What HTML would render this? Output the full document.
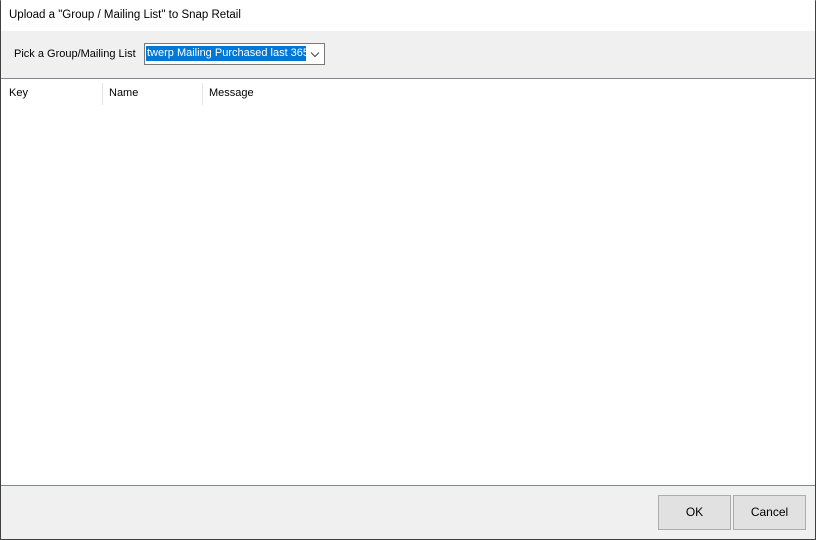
<!DOCTYPE html>
<html><head><style>
*{margin:0;padding:0;box-sizing:border-box}
body{width:816px;height:540px;position:relative;overflow:hidden;background:#f0f0f0;font-family:"Liberation Sans",sans-serif;font-size:11px;color:#000}
.win{position:absolute;left:0;top:0;width:816px;height:540px;border:1px solid #404040;border-top:1px solid #aaa}
.title{position:absolute;left:0;top:-1px;width:814px;height:31px;background:#fff;padding:9px 0 0 8px;font-size:11.5px}
.lbl{position:absolute;left:13px;top:47px;white-space:nowrap}
.combo{position:absolute;left:143px;top:42px;width:181px;height:22px;background:#fff;border:1px solid #7a7a7a}
.sel{position:absolute;left:1px;top:2px;width:160px;height:15px;background:#0078d7;color:#fff;padding:0 0 0 1px;line-height:15px;white-space:nowrap;overflow:hidden;font-size:11px}
.list{position:absolute;left:0;top:77px;width:814px;height:408px;background:#fff;border-top:1px solid #828790;border-bottom:1px solid #828790}
.h{position:absolute;top:8px}
.sep{position:absolute;top:4px;width:1px;height:22px;background:#e5e5e5}
.btn{position:absolute;top:494px;width:73px;height:35px;background:#e1e1e1;border:1px solid #adadad;text-align:center;line-height:33px;font-size:12px}
</style></head><body>
<div class="win">
<div class="title">Upload a "Group / Mailing List" to Snap Retail</div>
<div class="lbl">Pick a Group/Mailing List</div>
<div class="combo"><div class="sel">twerp Mailing Purchased last 365</div>
<svg style="position:absolute;left:165px;top:7px" width="10" height="7" viewBox="0 0 10 7"><path d="M1 1.5L5 5.5L9 1.5" fill="none" stroke="#444" stroke-width="1"/></svg></div>
<div class="list">
<div class="h" style="left:8px">Key</div>
<div class="sep" style="left:101px"></div>
<div class="h" style="left:108px">Name</div>
<div class="sep" style="left:201px"></div>
<div class="h" style="left:208px">Message</div>
</div>
<div class="btn" style="left:657px">OK</div>
<div class="btn" style="left:732px">Cancel</div>
</div>
</body></html>
